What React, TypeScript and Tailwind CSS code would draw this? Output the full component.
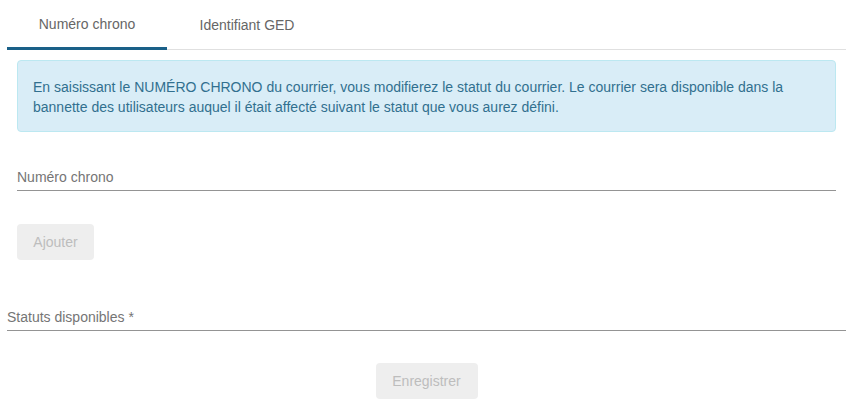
import React from "react";

export default function App() {
  return (
    <div className="w-[846px] h-[408px] bg-white pl-[7px] font-['Liberation_Sans',Arial,sans-serif] text-[14px]">
      <div className="flex h-[50px] border-b border-[#e0e0e0]">
        <div className="w-[160px] flex items-center justify-center border-b-[3px] border-[#1a6088] mb-[-1px] text-[#666] pt-[2px]">
          Numéro chrono
        </div>
        <div className="w-[160px] flex items-center justify-center text-[#666] pt-[2px]">
          Identifiant GED
        </div>
      </div>
      <div className="px-[10px]">
        <div className="mt-[10px] h-[72px] rounded-[4px] border border-[#bce8f1] bg-[#d9edf7] px-[15px] pt-[16px] text-[#31708f] leading-[20px]">
          En saisissant le NUMÉRO CHRONO du courrier, vous modifierez le statut du courrier. Le courrier sera disponible dans la bannette des utilisateurs auquel il était affecté suivant le statut que vous aurez défini.
        </div>
        <div className="mt-[35px] border-b border-[#949494] pb-[2px] text-[#757575]">Numéro chrono</div>
        <button disabled className="mt-[33px] h-[36px] w-[77px] rounded-[4px] bg-[#eeeeee] text-[#bdbdbd]">
          Ajouter
        </button>
      </div>
      <div className="mt-[47px] border-b border-[#949494] pb-[2px] text-[#757575]">Statuts disponibles *</div>
      <div className="flex justify-center mt-[32px]">
        <button disabled className="h-[36px] w-[102px] rounded-[4px] bg-[#eeeeee] text-[#bdbdbd]">
          Enregistrer
        </button>
      </div>
    </div>
  );
}
